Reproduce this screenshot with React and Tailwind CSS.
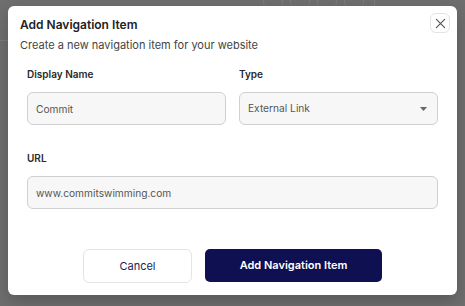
import React, { useState } from "react";

const Field = ({ label, children, className = "" }) => (
  <div className={`flex flex-col ${className}`}>
    <label className="text-[10px] leading-4 font-semibold text-[#2a2a2a]">{label}</label>
    <div className="mt-[10px]">{children}</div>
  </div>
);

const inputClass =
  "w-full h-[33px] px-[8px] rounded-[6px] border border-[#d0d0d0] bg-[#f7f7f7] text-[10.2px] text-[#555] outline-none";

export default function App() {
  const [name, setName] = useState("Commit");
  const [type, setType] = useState("External Link");
  const [url, setUrl] = useState("www.commitswimming.com");

  return (
    <div
      className="relative w-[465px] h-[306px] overflow-hidden bg-[#6e6e6e] pt-[6px] px-[8px]"
      style={{ fontFamily: "Inter, 'Noto Sans', sans-serif" }}
    >
      {/* dimmed page behind the dialog */}
      <div className="absolute top-[-14px] left-[263px] flex gap-[7px]">
        <div className="w-[20px] h-[26px] rounded-full border border-[#7a7a7a]" />
        <div className="w-[20px] h-[26px] rounded-full border border-[#7a7a7a]" />
        <div className="w-[20px] h-[26px] rounded-full border border-[#7a7a7a]" />
        <div className="w-[20px] h-[26px] rounded-full border border-[#7a7a7a]" />
      </div>
      <div className="absolute top-0 left-[374px] w-px h-[8px] bg-[#7a7a7a]" />
      <div className="absolute top-[40px] left-0 w-[8px] h-px bg-[#7a7a7a]" />

      <div className="relative h-[289px] rounded-[6px] bg-white pt-[11px] shadow-[0_6px_16px_rgba(0,0,0,0.2)]">
        <button className="absolute top-[7px] right-[7px] w-[20px] h-[20px] rounded-[6px] border border-[#e3e3e3] flex items-center justify-center text-[#555]">
          <svg width="11" height="11" viewBox="0 0 12 12" fill="none" stroke="currentColor" strokeWidth="1.3" strokeLinecap="round">
            <path d="M1.5 1.5l9 9M10.5 1.5l-9 9" />
          </svg>
        </button>

        <div className="px-[12px]">
          <h2 className="text-[12px] leading-4 font-semibold text-[#222]">Add Navigation Item</h2>
          <p className="mt-[4px] text-[11px] leading-4 text-[#444]">Create a new navigation item for your website</p>
        </div>

        <div className="px-[19px] mt-[13px]">
          <div className="grid grid-cols-2 gap-[13px]">
            <Field label="Display Name">
              <input className={inputClass} value={name} onChange={(e) => setName(e.target.value)} />
            </Field>
            <Field label="Type">
              <div className="relative">
                <select
                  className={`${inputClass} appearance-none`}
                  value={type}
                  onChange={(e) => setType(e.target.value)}
                >
                  <option>External Link</option>
                  <option>Internal Page</option>
                </select>
                <svg className="absolute right-[11px] top-[15px]" width="7" height="4" viewBox="0 0 7 4">
                  <path d="M0 0h7L3.5 4z" fill="#666" />
                </svg>
              </div>
            </Field>
          </div>

          <Field label="URL" className="mt-[25px]">
            <input className={inputClass} value={url} onChange={(e) => setUrl(e.target.value)} />
          </Field>
        </div>

        <div className="flex justify-center gap-[13px] mt-[40px]">
          <button className="w-[109px] h-[34px] rounded-[6px] border border-[#e4e4e4] bg-white text-[11px] text-[#1c1c55]">
            Cancel
          </button>
          <button className="w-[177px] h-[33px] rounded-[5px] bg-[#0e1052] text-[11px] font-semibold text-white">
            Add Navigation Item
          </button>
        </div>
      </div>
    </div>
  );
}
